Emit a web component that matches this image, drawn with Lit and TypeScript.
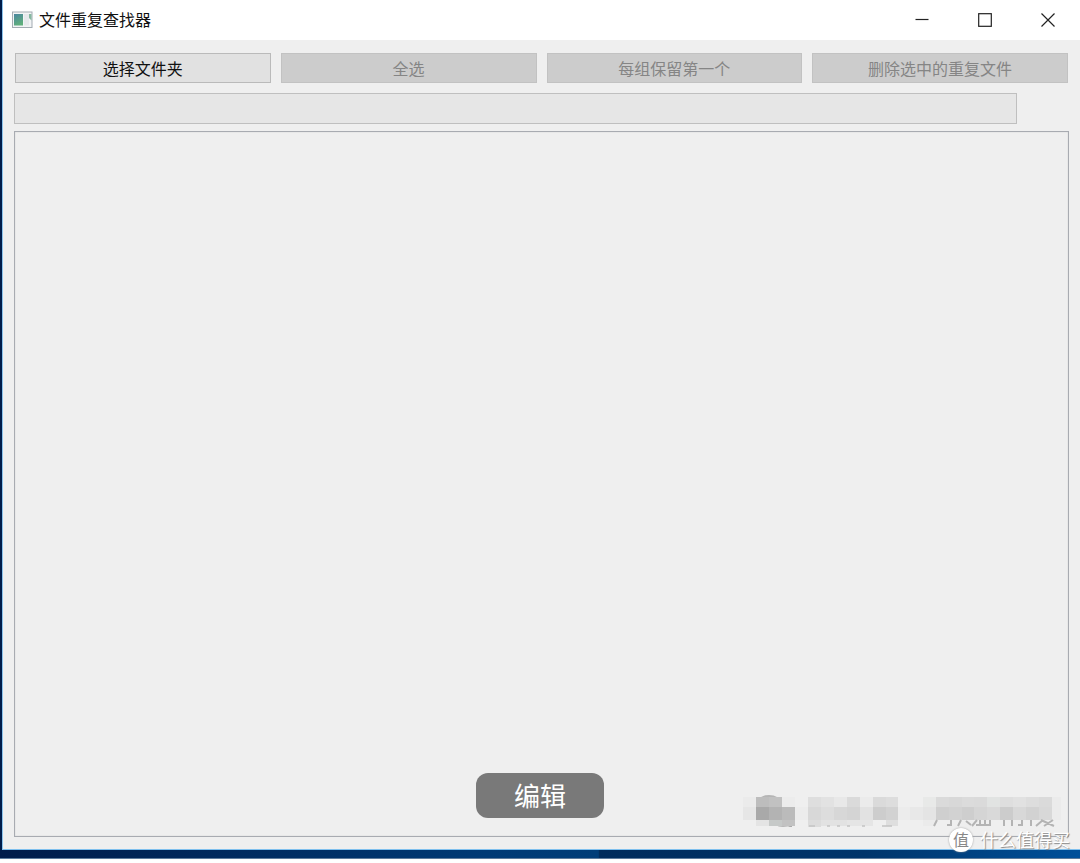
import { LitElement, html, svg, css } from "lit";
import { customElement, property, state } from "lit/decorators.js";

type Tile = [x: number, y: number, w: number, h: number, fill: string];

const TOP = 5;
const MID = 15;
const LOW = 28;

/* Mosaic tiles, on a 13px column grid. */
const tiles: Tile[] = [
  [0, TOP, 13, 10, "#ebebeb"],
  [0, MID, 13, 13, "#e6e6e6"],
  [13, TOP, 13, 10, "#bdbdbd"],
  [26, TOP, 13, 10, "#c1c1c1"],
  [39, TOP, 13, 10, "#ececec"],
  [13, MID, 13, 13, "#a9a9a9"],
  [26, MID, 13, 13, "#b3b3b3"],
  [39, MID, 13, 13, "#bbbbbb"],
  [13, LOW, 13, 6, "#e4e4e4"],
  [26, LOW, 13, 6, "#c6c9c8"],
  [39, LOW, 13, 6, "#c2c2c2"],
  [52, MID, 13, 13, "#ececec"],
  [65, TOP, 13, 10, "#dedede"],
  [78, TOP, 13, 10, "#e2e2e2"],
  [91, TOP, 13, 10, "#e8e8e8"],
  [104, TOP, 13, 10, "#dadada"],
  [117, TOP, 13, 10, "#ebebeb"],
  [130, TOP, 13, 10, "#dadada"],
  [143, TOP, 12, 10, "#dddddd"],
  [65, MID, 13, 13, "#d8d8d8"],
  [78, MID, 13, 13, "#dddddd"],
  [91, MID, 13, 13, "#d7d7d7"],
  [104, MID, 13, 13, "#d4d4d4"],
  [117, MID, 13, 13, "#e2e2e2"],
  [130, MID, 13, 13, "#cdcdcd"],
  [143, MID, 12, 13, "#d2d2d2"],
  [65, LOW, 13, 7, "#dcdcdc"],
  [78, LOW, 26, 6, "#e2e2e2"],
  [104, LOW, 26, 6, "#e5e5e5"],
  [143, LOW, 12, 6, "#dedede"],
  [155, MID, 12, 13, "#ececec"],
  [167, MID, 13, 13, "#e8e8e8"],
  [180, TOP, 13, 10, "#e8e9e8"],
  [180, MID, 13, 13, "#e4e4e4"],
  [180, LOW, 13, 6, "#ebebeb"],
  [193, TOP, 13, 10, "#dadada"],
  [206, TOP, 13, 10, "#d8d8d8"],
  [219, TOP, 12, 10, "#dbdbdb"],
  [231, TOP, 13, 10, "#dadada"],
  [244, TOP, 13, 10, "#e1e3e2"],
  [257, TOP, 13, 10, "#dedede"],
  [270, TOP, 13, 10, "#e1e1e1"],
  [283, TOP, 13, 10, "#dddddd"],
  [296, TOP, 13, 10, "#dadada"],
  [193, MID, 13, 13, "#cfcfcf"],
  [206, MID, 13, 13, "#d2d2d2"],
  [219, MID, 12, 13, "#cecece"],
  [231, MID, 13, 13, "#d5d5d5"],
  [244, MID, 13, 13, "#d9d9d9"],
  [257, MID, 13, 13, "#cccccc"],
  [270, MID, 13, 13, "#d8d8d8"],
  [283, MID, 13, 13, "#d2d2d2"],
  [296, MID, 13, 13, "#d8d8d8"],
  [309, TOP, 9, 23, "#ebebeb"],
];

@customElement("title-bar")
export class TitleBar extends LitElement {
  @property() heading = "";

  static styles = css`
    :host {
      display: flex;
      align-items: center;
      height: 40px;
      padding-left: 9px;
      background: #fff;
      color: #111;
    }
    .app-icon {
      display: block;
      width: 21px;
      height: 18px;
      margin-right: 6px;
    }
    .heading {
      flex: 1;
      margin: 0;
      padding-bottom: 2px;
      font-size: 16px;
      font-weight: 400;
      line-height: 24px;
      white-space: nowrap;
    }
    .control {
      display: grid;
      place-items: center;
      width: 63px;
      height: 40px;
      padding: 0 1px 1px 0;
      border: 0;
      background: none;
    }
    .control:hover {
      background: #e5e5e5;
    }
  `;

  render() {
    return html`
      <svg class="app-icon" viewBox="0 0 21 18" aria-hidden="true">
        <defs>
          <linearGradient id="pane" x1="0" y1="0" x2="0.4" y2="1">
            <stop offset="0" stop-color="#4a86a0" />
            <stop offset="1" stop-color="#5fae7c" />
          </linearGradient>
        </defs>
        <rect x="0.5" y="1" width="19.5" height="15.5" fill="#f2f4f5" stroke="#a3abb2" />
        <rect x="2" y="3" width="9" height="11.5" fill="url(#pane)" />
        <rect x="12" y="3" width="5" height="11.5" fill="#e6e9ec" />
        <path d="M17 3H19.5v6.5L17 7z" fill="#86b8a0" />
      </svg>
      <h1 class="heading">${this.heading}</h1>
      <button class="control" aria-label="最小化">
        <svg width="14" height="14" viewBox="0 0 14 14" stroke="#222" fill="none">
          <path d="M0.5 6.5H13.5" stroke-width="1.2" />
        </svg>
      </button>
      <button class="control" aria-label="最大化">
        <svg width="14" height="14" viewBox="0 0 14 14" stroke="#222" fill="none">
          <rect x="0.7" y="0.7" width="12.6" height="12.6" stroke-width="1.2" />
        </svg>
      </button>
      <button class="control" aria-label="关闭">
        <svg width="14" height="14" viewBox="0 0 14 14" stroke="#222" fill="none">
          <path d="M0.5 0.5 13.5 13.5M13.5 0.5 0.5 13.5" stroke-width="1.2" />
        </svg>
      </button>
    `;
  }
}

@customElement("site-watermark")
export class SiteWatermark extends LitElement {
  static styles = css`
    :host {
      display: block;
      width: 330px;
      pointer-events: none;
    }
    .mosaic {
      display: block;
      width: 330px;
      height: 35px;
    }
    .brand {
      display: flex;
      align-items: center;
      justify-content: flex-end;
      gap: 7px;
      padding-right: 3px;
      color: #fff;
      font-size: 18px;
      line-height: 24px;
      text-shadow: 1px 1px 1px #888;
      white-space: nowrap;
    }
    .seal {
      width: 24px;
      height: 24px;
      border-radius: 50%;
      background: #fff;
      box-shadow: 0 0 2px #999;
      color: #888;
      font-size: 16px;
      line-height: 23px;
      text-align: center;
      text-shadow: none;
    }
    .name {
      padding-bottom: 1px;
    }
  `;

  render() {
    return html`
      <svg class="mosaic" viewBox="0 0 330 35" aria-hidden="true">
        <ellipse cx="26" cy="11" rx="12" ry="8" fill="#b5b5b5" />
        <ellipse cx="40" cy="27" rx="11" ry="8" fill="#b5b5b5" />
        <path d="M42 33h7v3z" fill="#aaa" />
        ${tiles.map(
          ([x, y, w, h, fill]) =>
            svg`<rect x=${x} y=${y} width=${w} height=${h} fill=${fill} />`
        )}
        <g fill="none" stroke="#b4b4b4" stroke-width="2">
          <path
            d="M66 34h6M84 34h3M94 34h3M104 34h3M119 34h3M139 34h10"
            stroke="#c4c4c4"
            stroke-width="1.5"
          />
          <path d="M194 28l-3 6M208 28v5h-4M218 28l-3 6M223 29l5 4M234 28l-5 6" />
          <path d="M233 33h15M237 28v5M242 28v5M247 28v6M261 28v6M269 28v6" />
          <path d="M279 28v5h-4M288 28v6M300 28l-7 6M298 28l13 6M310 28l-9 6" />
        </g>
      </svg>
      <div class="brand">
        <span class="seal">值</span>
        <span class="name">什么值得买</span>
      </div>
    `;
  }
}

@customElement("app-root")
export class AppRoot extends LitElement {
  @state() private progress = 0;

  static styles = css`
    :host {
      position: relative;
      display: flex;
      flex-direction: column;
      box-sizing: border-box;
      height: 100vh;
      padding-bottom: 4px;
      background: #fff;
      font-family: "Noto Sans CJK SC", sans-serif;
    }
    .desktop {
      display: flex;
      flex: 1;
      flex-direction: column;
      padding: 0 0 8px 2px;
      border-bottom: 1px solid #5d7b9c;
      background: linear-gradient(
        90deg,
        #001c4a 0,
        #003a75 45%,
        #003d78 55.4%,
        #002c5c 55.5%,
        #00356b 80%,
        #00509a 100%
      );
    }
    .window {
      display: flex;
      flex: 1;
      flex-direction: column;
      border-bottom: 1px solid #7fc0ee;
      border-left: 1px solid #8cc4ec;
      background: #efefef;
    }
    .content {
      display: flex;
      flex: 1;
      flex-direction: column;
      padding: 13px 11px 12px;
    }
    .toolbar {
      display: grid;
      grid-template-columns: repeat(4, 1fr);
      gap: 10px;
      padding: 0 1px;
    }
    .action {
      height: 30px;
      padding: 0;
      border: 1px solid #bababa;
      background: #e1e1e1;
      color: #111;
      font: inherit;
      font-size: 16px;
      line-height: 28px;
    }
    .action:disabled {
      border-color: #c2c2c2;
      background: #ccc;
      color: #858585;
    }
    .progress-row {
      display: flex;
      padding: 10px 52px 7px 0;
    }
    .progress {
      box-sizing: border-box;
      flex: 1;
      width: 100%;
      height: 31px;
      border: 1px solid #bfbfbf;
      appearance: none;
      background: #e6e6e6;
    }
    .progress::-webkit-progress-bar {
      background: #e6e6e6;
    }
    .progress::-webkit-progress-value {
      background: #06b025;
    }
    .results {
      flex: 1;
      border: 1px solid #a8abb1;
      box-shadow: inset 0 0 1px #a8abb1;
    }
    .edit {
      position: absolute;
      bottom: 45px;
      left: 50%;
      width: 128px;
      height: 45px;
      padding: 0 0 2px;
      border: 0;
      border-radius: 12px;
      background: #797979;
      color: #fff;
      font: inherit;
      font-size: 26px;
      line-height: 43px;
      transform: translateX(-50%);
    }
    .watermark {
      position: absolute;
      right: 7px;
      bottom: 11px;
    }
  `;

  render() {
    return html`
      <div class="desktop">
        <main class="window">
          <title-bar heading="文件重复查找器"></title-bar>
          <div class="content">
            <div class="toolbar">
              <button class="action">选择文件夹</button>
              <button class="action" disabled>全选</button>
              <button class="action" disabled>每组保留第一个</button>
              <button class="action" disabled>删除选中的重复文件</button>
            </div>
            <div class="progress-row">
              <progress
                class="progress"
                aria-label="扫描进度"
                max="100"
                .value=${this.progress}
              ></progress>
            </div>
            <section class="results" aria-label="重复文件"></section>
          </div>
        </main>
      </div>
      <button class="edit">编辑</button>
      <site-watermark class="watermark"></site-watermark>
    `;
  }
}
